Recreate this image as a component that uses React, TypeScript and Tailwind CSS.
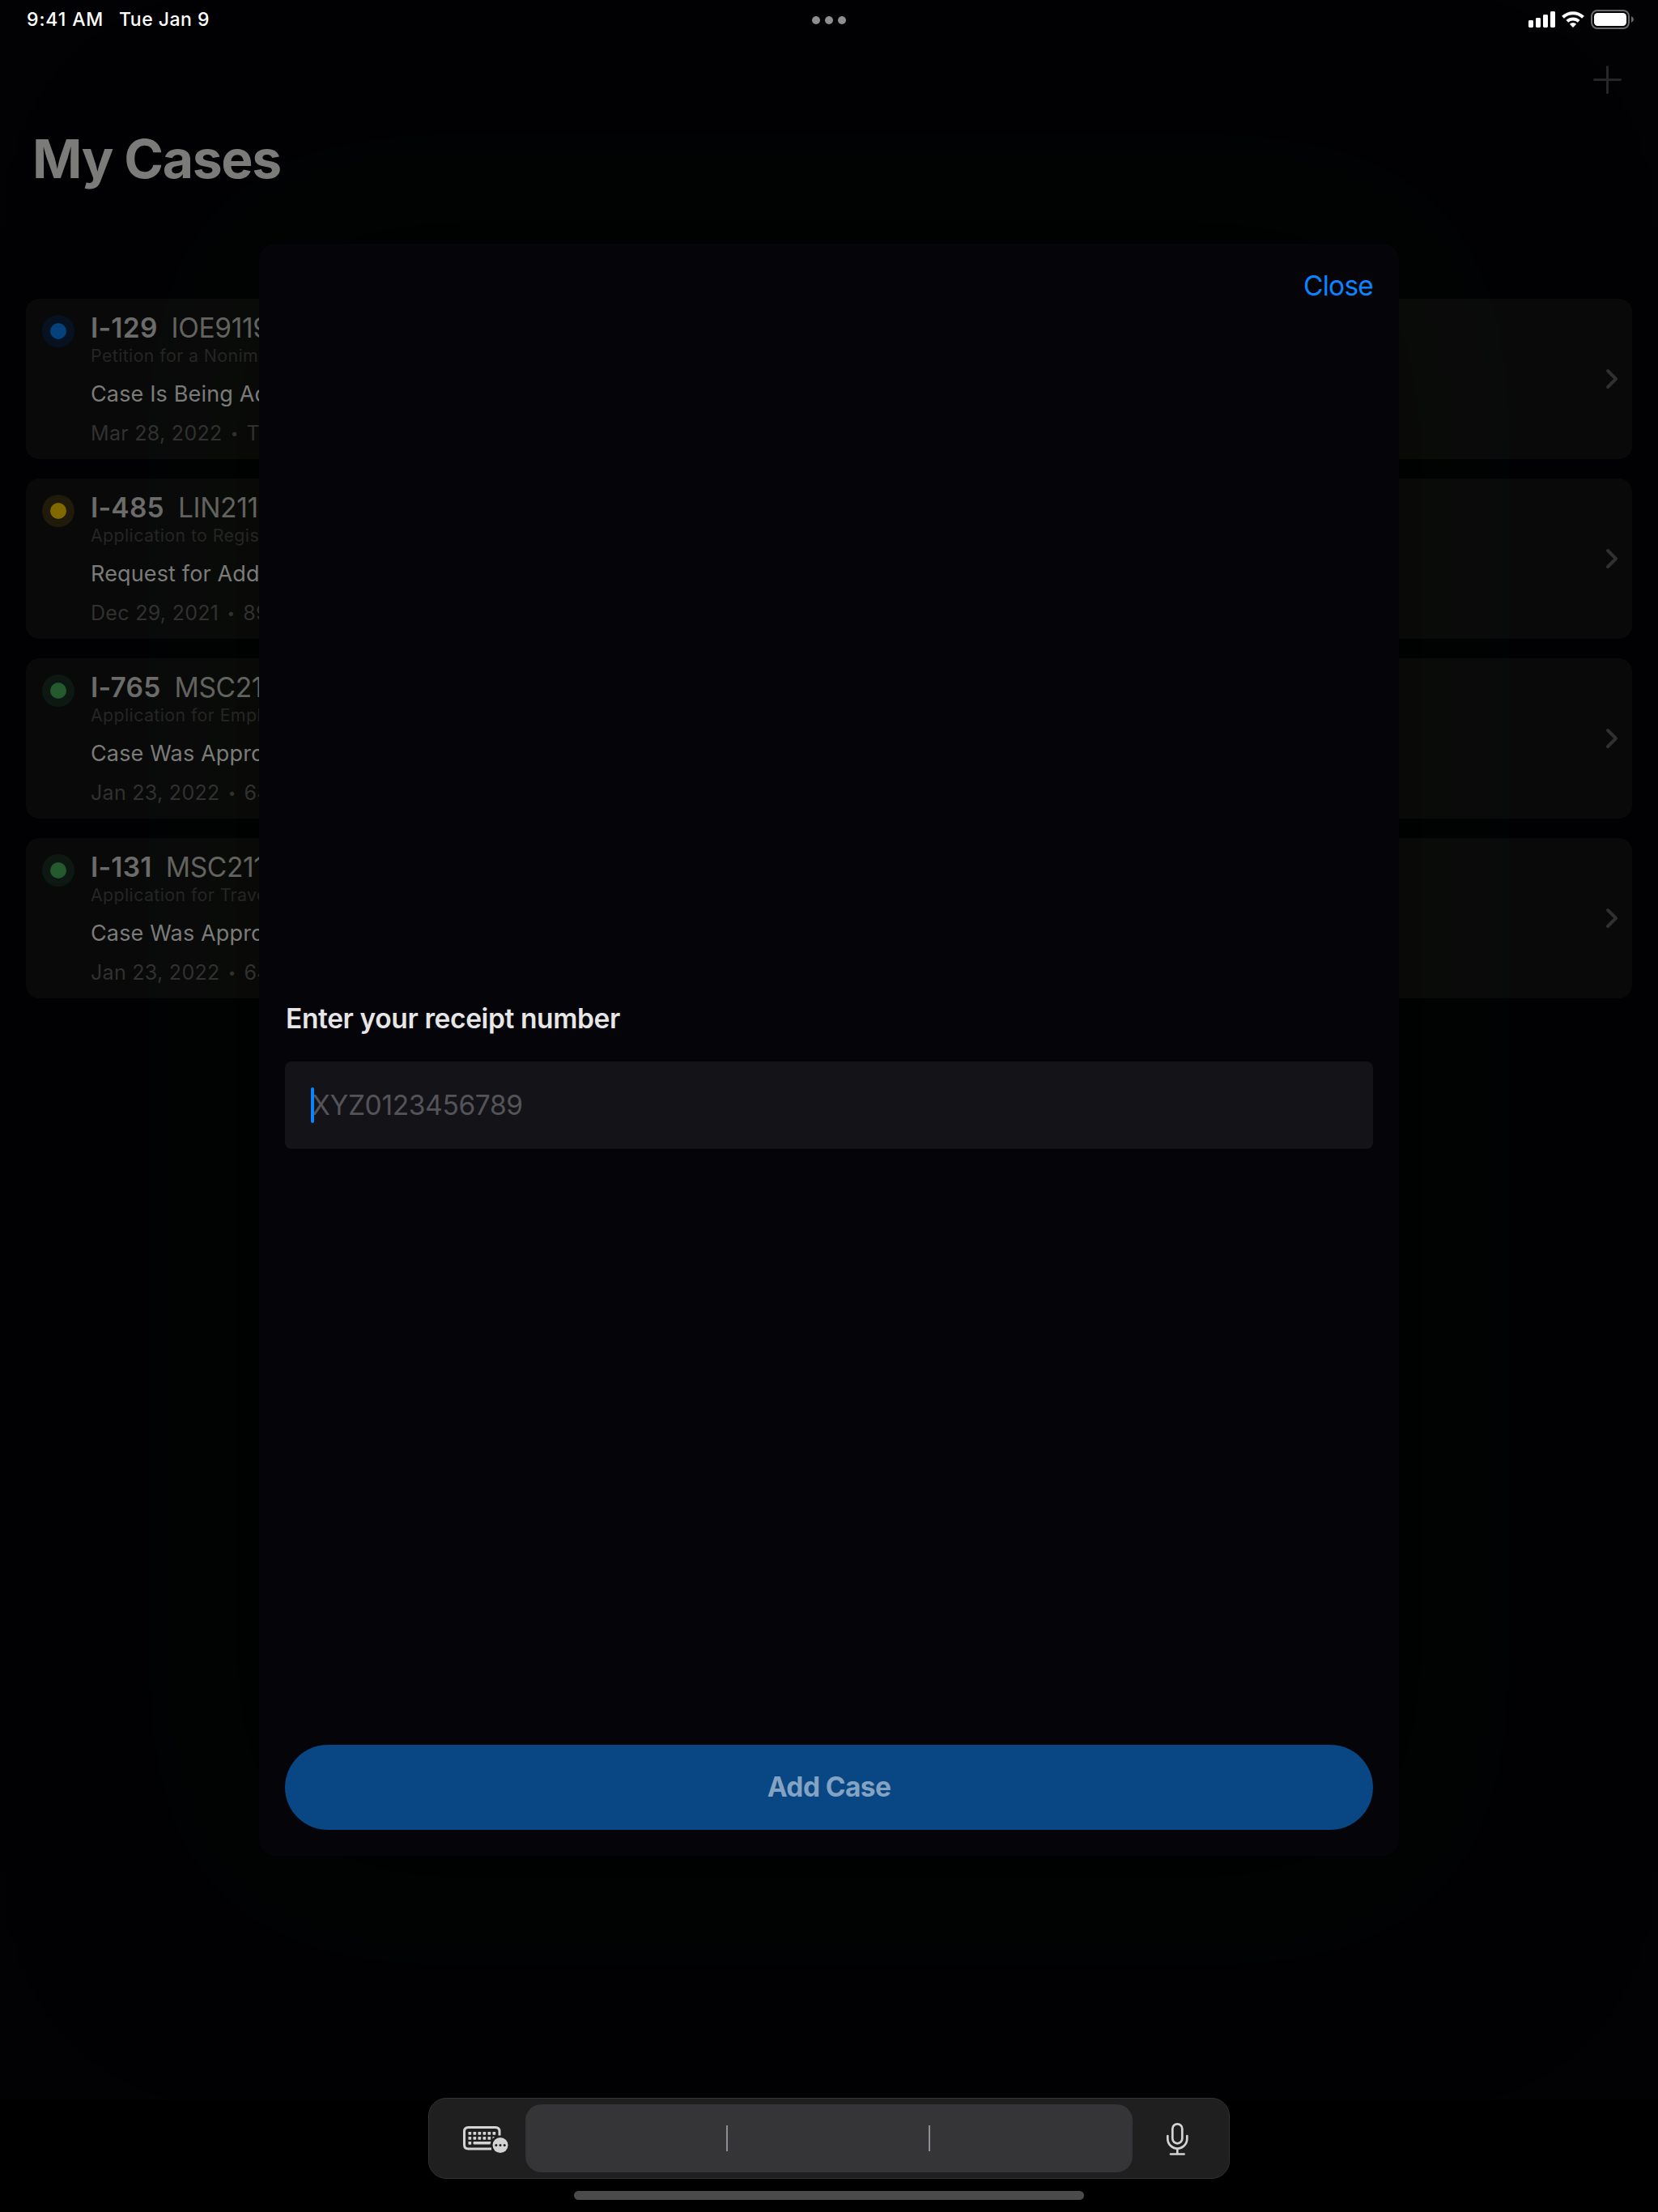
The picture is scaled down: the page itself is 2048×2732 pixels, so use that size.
import React from "react";

type Case = {
  form: string;
  receipt: string;
  title: string;
  status: string;
  date: string;
  note: string;
  halo: string;
  dot: string;
};

const cases: Case[] = [
  { form: "I-129", receipt: "IOE9119", title: "Petition for a Nonim", status: "Case Is Being Ad", date: "Mar 28, 2022", note: "To", halo: "bg-[#06121f]", dot: "bg-[#04417d]" },
  { form: "I-485", receipt: "LIN211", title: "Application to Regis", status: "Request for Add", date: "Dec 29, 2021", note: "89", halo: "bg-[#1f1a09]", dot: "bg-[#806a00]" },
  { form: "I-765", receipt: "MSC211", title: "Application for Empl", status: "Case Was Appro", date: "Jan 23, 2022", note: "64", halo: "bg-[#0d1812]", dot: "bg-[#245a2e]" },
  { form: "I-131", receipt: "MSC211", title: "Application for Trave", status: "Case Was Appro", date: "Jan 23, 2022", note: "64", halo: "bg-[#0d1812]", dot: "bg-[#245a2e]" },
];

function StatusIcons() {
  return (
    <svg width="131" height="26" viewBox="1888 11 131 26" className="block">
      <g fill="#fff">
        <rect x="1888" y="25" width="6" height="9" rx="1.4" />
        <rect x="1897" y="22" width="6" height="12" rx="1.4" />
        <rect x="1906" y="18" width="6" height="16" rx="1.4" />
        <rect x="1915" y="14" width="6" height="20" rx="1.4" />
      </g>
      <g fill="none" stroke="#fff" strokeWidth="4">
        <path d="M1930.5 21.2A18 18 0 0 1 1955.5 21.2" />
        <path d="M1935.8 26.3A10.5 10.5 0 0 1 1950.2 26.3" />
      </g>
      <path d="M1943 34l-4.200-4.200a6 6 0 0 1 8.400 0z" fill="#fff" />
      <rect x="1966" y="13" width="46" height="22" rx="7" fill="none" stroke="#69696b" strokeWidth="2" />
      <rect x="1969" y="16" width="40" height="16" rx="4.5" fill="#fff" />
      <path d="M2015 20q3 1.500 3 4t-3 4z" fill="#69696b" />
    </svg>
  );
}

function KeyboardIcon() {
  return (
    <svg width="56" height="34" viewBox="572 2625 56 34" className="block" fill="#d4d3d4">
      <path
        d="M617 2637.5V2632.500Q617 2627.500 612 2627.500H578.500Q573.500 2627.500 573.500 2632.500V2649Q573.500 2654 578.500 2654H607"
        fill="none"
        stroke="#d4d3d4"
        strokeWidth="3"
      />
      {[0, 1, 2, 3, 4, 5].map((i) => (
        <rect key={i} x={578.5 + i * 6} y="2633" width="3.700" height="3.700" rx="0.600" />
      ))}
      {[0, 1, 2, 3, 4].map((i) => (
        <rect key={i} x={578.5 + i * 6} y="2639" width="3.700" height="3.700" rx="0.600" />
      ))}
      <path d="M608.500 2639h2.500l-2.500 2.500z" />
      <rect x="578.500" y="2645" width="3.700" height="3.700" rx="0.600" />
      <path d="M585.500 2645H606.500l-1 3.500H585.500q-1 0-1-1v-1.500q0-1 1-1z" />
      <circle cx="618" cy="2649.500" r="9.500" />
      <g fill="#1f1f1f">
        <circle cx="612.800" cy="2649.500" r="1.500" />
        <circle cx="618" cy="2649.500" r="1.500" />
        <circle cx="623.200" cy="2649.500" r="1.500" />
      </g>
    </svg>
  );
}

function MicIcon() {
  return (
    <svg width="28" height="42" viewBox="1440 2621 28 42" className="block" fill="none" stroke="#d4d3d4" strokeWidth="2.700" strokeLinecap="round">
      <rect x="1448.300" y="2623.300" width="12" height="24" rx="6" />
      <path d="M1442.300 2638V2641.500A12 12 0 0 0 1466.300 2641.500V2638M1454.300 2653.500V2660.500M1446 2660.500H1462.600" />
    </svg>
  );
}

function CaseCard({ item }: { item: Case }) {
  return (
    <div className="flex h-[198px] items-center justify-between rounded-2xl bg-[rgba(255,250,235,0.036)] pr-4">
      <div className="flex h-full pl-5">
        <div className={`mt-5 flex size-10 items-center justify-center rounded-full ${item.halo}`}>
          <div className={`size-5 rounded-full ${item.dot}`} />
        </div>
        <div className="flex flex-col whitespace-nowrap pl-5 pt-4">
          <div className="flex gap-[17px] text-[33.5px] leading-10 text-[#6b6b69]">
            <span className="font-semibold tracking-[0.25px]">{item.form}</span>
            <span className="tracking-[-0.35px] text-[#62625f]">{item.receipt}</span>
          </div>
          <div className="text-[21.3px] leading-7 tracking-[0.42px] text-[#252524]">{item.title}</div>
          <div className="mt-[17px] text-[27px] leading-[34px] tracking-[0.15px] text-[#7b7b79]">{item.status}</div>
          <div className="mt-[15px] flex text-[25px] leading-8 tracking-[0.3px] text-[#31312f]">
            <span>{item.date}</span>
            <span className="w-[30px] text-center text-[17px]">•</span>
            <span>{item.note}</span>
          </div>
        </div>
      </div>
      <svg width="18" height="28" viewBox="0 0 18 28" fill="none" stroke="#303033" strokeWidth="4" strokeLinecap="round" strokeLinejoin="round">
        <path d="M4 4l10 10l-10 10" />
      </svg>
    </div>
  );
}

export default function App() {
  return (
    <div className="relative h-[2732px] w-[2048px] overflow-hidden bg-black font-['Inter',sans-serif] text-white">
      <div className="absolute inset-x-0 top-0 h-[2594px] bg-[#020204]" />
      <div className="absolute left-[320px] top-[301px] h-[1991px] w-[1408px] rounded-[20px] shadow-[0_0_260px_30px_#000500]" />

      <div className="relative flex h-full flex-col">
        <header className="flex h-12 items-center pl-8 pr-[29px]">
          <div className="flex flex-1 text-[23px] font-medium">
            <span className="w-[115px] pl-px tracking-[0.9px]">9:41 AM</span>
            <span className="tracking-[0.5px]">Tue Jan 9</span>
          </div>
          <div className="flex gap-1.5 pr-[3px] pt-0.5">
            <div className="size-2.5 rounded-full bg-[#8e8e90]" />
            <div className="size-2.5 rounded-full bg-[#8e8e90]" />
            <div className="size-2.5 rounded-full bg-[#8e8e90]" />
          </div>
          <div className="flex flex-1 justify-end">
            <StatusIcons />
          </div>
        </header>
        <div className="flex h-[100px] justify-end pr-[44px] pt-[32px]">
          <svg width="37" height="37" viewBox="0 0 37 37" stroke="#262626" strokeWidth="3" strokeLinecap="round">
            <path d="M18.500 2.500V34.500M2.500 18.500H34.500" />
          </svg>
        </div>
        <h1 className="h-[221px] pl-10 text-[66px] font-bold leading-[96px] tracking-[-1.4px] text-[#7b7b7a]">My Cases</h1>
        <div className="flex flex-col gap-6 px-8">
          {cases.map((item) => (
            <CaseCard key={item.form} item={item} />
          ))}
        </div>
      </div>

      <div className="absolute left-[320px] top-[301px] flex h-[1991px] w-[1408px] flex-col rounded-[20px] bg-[#050408] px-8 pb-8">
        <div className="flex justify-end pt-8">
          <button className="text-[33.5px] leading-10 tracking-[-0.8px] text-[#0a84ff]">Close</button>
        </div>
        <div className="flex flex-1 flex-col pt-[865px]">
          <label className="pl-px text-[33.5px] font-semibold leading-10 tracking-[-0.38px] text-[#e6e6e6]">Enter your receipt number</label>
          <div className="relative mt-[33px] flex h-[108px] items-center rounded-lg bg-[#141318] pl-[33px]">
            <span className="text-[33.5px] leading-10 tracking-[-0.35px] text-[#545458]">XYZ0123456789</span>
            <div className="absolute left-8 top-8 h-11 w-1 rounded-sm bg-[#0a84ff]" />
          </div>
        </div>
        <button className="h-[105px] rounded-full bg-[#084684] text-[33.5px] font-bold tracking-[-0.6px] text-[#84a3c2]">Add Case</button>
      </div>

      <div className="absolute bottom-[41px] left-[529px] flex h-[100px] w-[990px] items-center rounded-[22px] border border-[#323232] bg-[#1f1f1f]">
        <div className="flex w-[119px] items-center pl-[42px] pt-0.5">
          <KeyboardIcon />
        </div>
        <div className="flex h-[84px] w-[750px] items-center justify-evenly rounded-[20px] bg-[#353537] pr-0.5">
          <div className="h-8 w-0.5 bg-[#8e8e92]" />
          <div className="h-8 w-0.5 bg-[#8e8e92]" />
        </div>
        <div className="flex flex-1 justify-center pr-[9px] pt-px">
          <MicIcon />
        </div>
      </div>
      <div className="absolute bottom-[15px] left-[709px] h-[11px] w-[630px] rounded-full bg-[#4b4b4b]" />
    </div>
  );
}
